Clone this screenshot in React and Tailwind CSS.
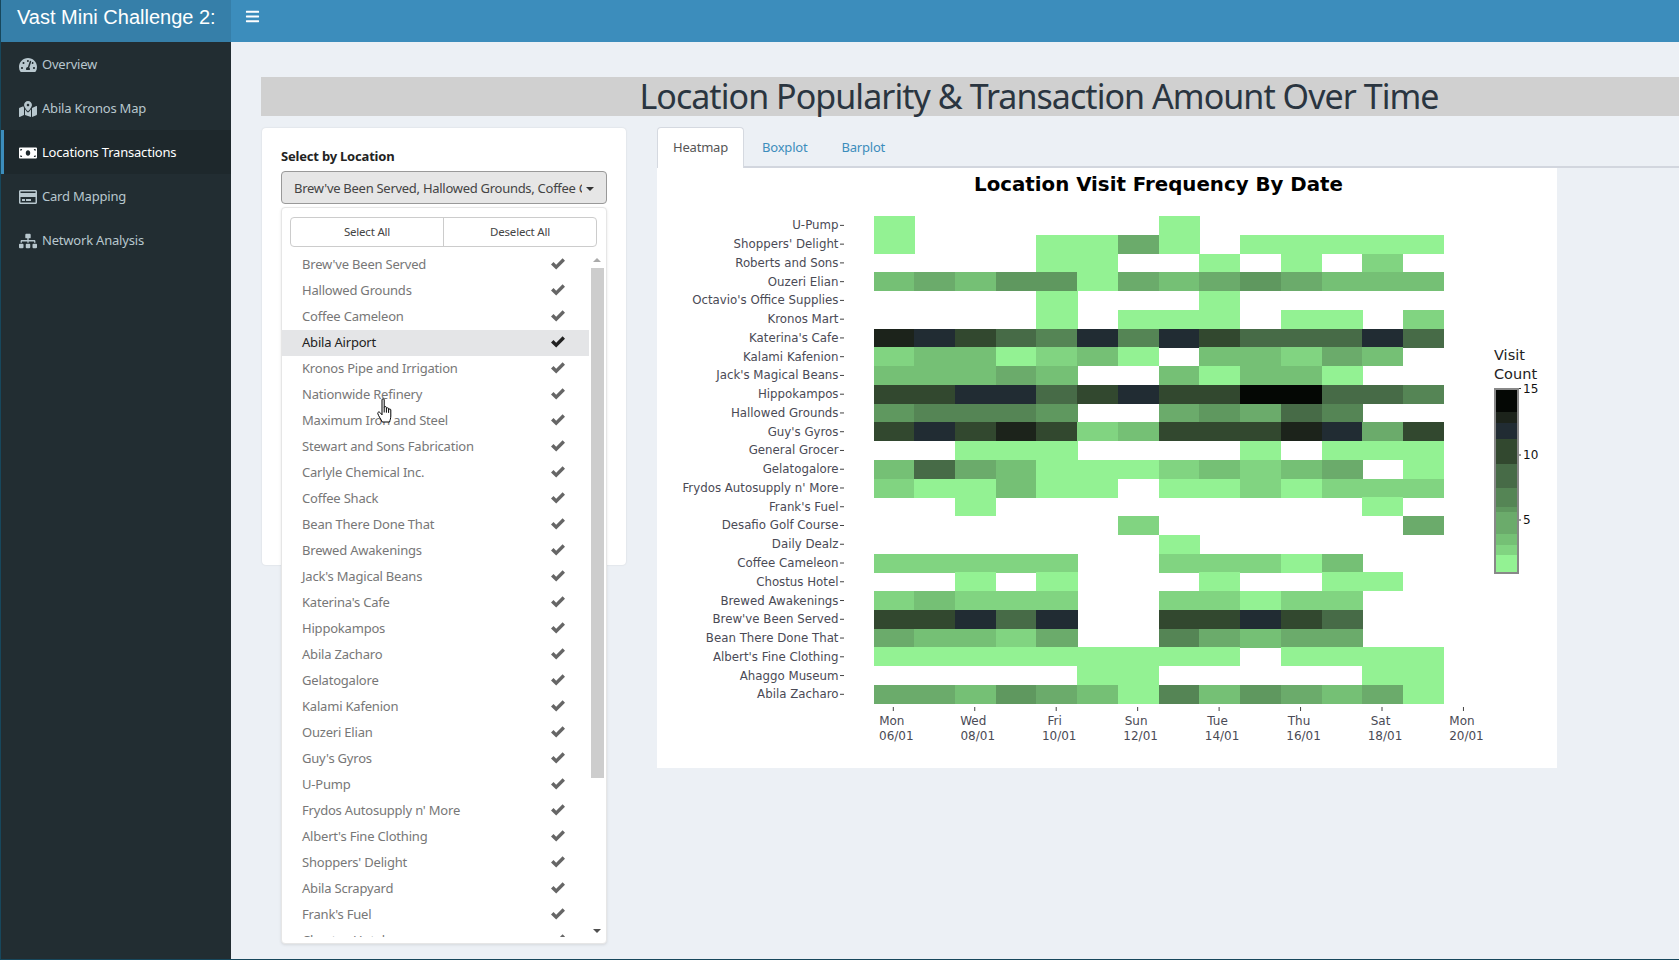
import React from "react";
import { FaTachometerAlt, FaMapMarkedAlt, FaMoneyBill, FaRegCreditCard, FaSitemap, FaBars } from "react-icons/fa";

const C = {
  a: "#93f293", b: "#81d481", c: "#75c075", d: "#6bab6b", e: "#5f985f", f: "#558555",
  g: "#476b47", h: "#32482f", i: "#212c33", j: "#1c231b", k: "#040704", ".": null,
};

const ROWS = [
  ["U-Pump", "a......a......"],
  ["Shoppers' Delight", "a...aada.aaaaa"],
  ["Roberts and Sons", "....aa..a.a.b."],
  ["Ouzeri Elian", "cdceeadcdedccc"],
  ["Octavio's Office Supplies", "....a...a....."],
  ["Kronos Mart", "....a.aaa.aa.b"],
  ["Katerina's Cafe", "jihgfifihgggig"],
  ["Kalami Kafenion", "bccabca.ccbdc."],
  ["Jack's Magical Beans", "cccdc..cacca.."],
  ["Hippokampos", "hhiighihhkkggf"],
  ["Hallowed Grounds", "efffe..dedgf.."],
  ["Guy's Gyros", "hihjhbchhhjidh"],
  ["General Grocer", "..aaa....a.aaa"],
  ["Gelatogalore", "cgdcaaabcbcd.a"],
  ["Frydos Autosupply n' More", "baacaa.aababbb"],
  ["Frank's Fuel", "..a.........a."],
  ["Desafio Golf Course", "......b......d"],
  ["Daily Dealz", ".......a......"],
  ["Coffee Cameleon", "bbbbb..bbbac.."],
  ["Chostus Hotel", "..a.a...a..aa."],
  ["Brewed Awakenings", "bcbbb..bbabb.."],
  ["Brew've Been Served", "hhigi..hhihg.."],
  ["Bean There Done That", "dccbd..fdcdd.."],
  ["Albert's Fine Clothing", "aaaaaaaaa.aaaa"],
  ["Ahaggo Museum", ".....aa.....aa"],
  ["Abila Zacharo", "ddcedcafcedcda"],
];

const X0 = 873.6, CW = 40.72, Y0 = 216, RH = 18.757;

const TICKS = [
  ["Mon", "06/01"], ["Wed", "08/01"], ["Fri", "10/01"], ["Sun", "12/01"],
  ["Tue", "14/01"], ["Thu", "16/01"], ["Sat", "18/01"], ["Mon", "20/01"],
];

const BAR = [
  ["k", 390, 412], ["j", 412, 423], ["i", 423, 439], ["h", 439, 464], ["g", 464, 488],
  ["f", 488, 507], ["e", 507, 512], ["d", 512, 534], ["c", 534, 545], ["b", 545, 555], ["a", 555, 572],
];

const ITEMS = [
  "Brew've Been Served", "Hallowed Grounds", "Coffee Cameleon", "Abila Airport", "Kronos Pipe and Irrigation",
  "Nationwide Refinery", "Maximum Iron and Steel", "Stewart and Sons Fabrication", "Carlyle Chemical Inc.",
  "Coffee Shack", "Bean There Done That", "Brewed Awakenings", "Jack's Magical Beans", "Katerina's Cafe",
  "Hippokampos", "Abila Zacharo", "Gelatogalore", "Kalami Kafenion", "Ouzeri Elian", "Guy's Gyros", "U-Pump",
  "Frydos Autosupply n' More", "Albert's Fine Clothing", "Shoppers' Delight", "Abila Scrapyard", "Frank's Fuel",
  "Chostus Hotel",
];

const NAV = [
  [FaTachometerAlt, "Overview"],
  [FaMapMarkedAlt, "Abila Kronos Map"],
  [FaMoneyBill, "Locations Transactions", true],
  [FaRegCreditCard, "Card Mapping"],
  [FaSitemap, "Network Analysis"],
];

function Check({ className }) {
  return (
    <svg viewBox="0 0 14 11.5" className={className} fill="currentColor">
      <polygon points="0,6.5 2.5,4 5.2,6.7 11.6,0.3 14,2.8 5.2,11.4" />
    </svg>
  );
}

function Hand({ className }) {
  return (
    <svg viewBox="0 0 16 25" className={className} fill="#fff" stroke="#000" strokeWidth="1" strokeLinejoin="round">
      <path d="M5 1.8c0-1.4 2.2-1.4 2.2 0V9.5c0-1.2 2.2-1.2 2.2 0v1.2c0-1.2 2.2-1.2 2.2 0v1.2c0-1.2 2.2-1.2 2.2 0V18c0 2.5-.8 4-1.2 6H5.2C4.4 21.8 1.4 18 .8 15.6c-.4-1.6 1.4-2.2 2.4-.9L5 16.8Z" />
      <path d="M7.2 9.5v5M9.4 10.7v4M11.6 11.9v3" fill="none" />
    </svg>
  );
}

function Chart() {
  const font = "'DejaVu Sans', Verdana, sans-serif";
  return (
    <svg viewBox="657 168 900 600" className="block w-[900px] h-[600px] tracking-normal">
      <text x="1158.5" y="191" textAnchor="middle" fontFamily={font} fontWeight="700" fontSize="19.8" fill="#000">
        Location Visit Frequency By Date
      </text>
      {ROWS.map(([name, cells], r) => (
        <g key={name}>
          <text x="838.5" y={Y0 + RH * r + RH / 2 + 4} textAnchor="end" fontFamily={font} fontSize="11.8" fill="#4a4a55">
            {name}
          </text>
          <rect x="840" y={Y0 + RH * r + RH / 2 - 0.5} width="4" height="1" fill="#444" />
          {cells.split("").map((c, i) =>
            C[c] ? (
              <rect key={i} x={X0 + CW * i} y={Y0 + RH * r} width={CW + 0.3} height={RH + 0.3} fill={C[c]} shapeRendering="crispEdges" />
            ) : null
          )}
        </g>
      ))}
      {TICKS.map(([d, t], i) => {
        const x = 893.3 + 81.45 * i;
        return (
          <g key={t} fontFamily={font} fontSize="12" fill="#4a4a55" textAnchor="middle">
            <rect x={x - 0.5} y="707" width="1" height="4" fill="#444" />
            <text x={x - 1.5} y="725">{d}</text>
            <text x={x + 3} y="740">{t}</text>
          </g>
        );
      })}
      <g fontFamily={font} fill="#222">
        <text x="1494" y="360" fontSize="14.5">Visit</text>
        <text x="1494" y="379" fontSize="14.5">Count</text>
        {BAR.map(([c, y1, y2]) => (
          <rect key={c} x="1495.5" y={y1} width="22" height={y2 - y1} fill={C[c]} shapeRendering="crispEdges" />
        ))}
        <rect x="1495" y="389" width="23" height="184" fill="none" stroke="#888" strokeWidth="2" />
        {[["15", 388], ["10", 454.5], ["5", 519.5]].map(([t, y]) => (
          <g key={t}>
            <rect x="1519" y={y} width="2" height="1" fill="#333" />
            <text x="1523" y={y + 4.5} fontSize="12" fill="#111">{t}</text>
          </g>
        ))}
      </g>
    </svg>
  );
}

export default function App() {
  return (
    <div className="h-screen w-full overflow-hidden flex flex-col bg-[#ecf0f5] border-l border-b border-[#17475c] font-['Noto_Sans',sans-serif] text-[13px] tracking-[-0.2px] text-[#333]">
      <header className="h-[42px] shrink-0 flex bg-[#3c8dbc] text-white">
        <div className="w-[230px] shrink-0 bg-[#367fa9] pl-[16px] pt-[5px] font-['Liberation_Sans',sans-serif] text-[20px] leading-[24px] tracking-normal">
          Vast Mini Challenge 2:
        </div>
        <div className="pl-[14px] pt-[9px]">
          <FaBars className="w-[15px] h-[15px]" />
        </div>
      </header>
      <div className="flex-1 flex min-h-0">
        <aside className="w-[230px] shrink-0 bg-[#222d32]">
          {NAV.map(([Icon, label, active]) => (
            <div
              key={label}
              className={
                active
                  ? "h-[44px] pt-[2px] flex items-center border-l-[3px] border-[#3c8dbc] bg-[#1e282c] pl-[15px] text-white"
                  : "h-[44px] pt-[2px] flex items-center border-l-[3px] border-transparent pl-[15px] text-[#b8c7ce]"
              }
            >
              <Icon className="w-[18px] h-[16px] mr-[5px] shrink-0" />
              <span>{label}</span>
            </div>
          ))}
        </aside>
        <main className="flex-1 min-w-0 overflow-hidden pt-[35px] pl-[30px]">
          <div className="w-[1556px] h-[39px] bg-[#d0d0d0] text-center text-[34px] leading-[38px] tracking-[-0.95px] text-[#2a3540] whitespace-nowrap">
            Location Popularity &amp; Transaction Amount Over Time
          </div>
          <div className="flex mt-[11px]">
            <section className="relative mt-[1px] w-[364px] h-[437px] ml-[1px] shrink-0 rounded-[4px] bg-white shadow-[0_0_2px_rgba(0,0,0,0.12)]">
              <div className="pl-[19px] pt-[20px] font-bold text-[13px] leading-[17px] text-[#222]">Select by Location</div>
              <button className="ml-[19px] mt-[6px] w-[326px] h-[33px] pt-[2px] flex items-center rounded-[4px] border border-[#999] bg-[#e6e6e6] pl-[12px] text-[#444]">
                <span className="w-[288px] overflow-hidden whitespace-nowrap text-left tracking-[-0.28px]">
                  Brew've Been Served, Hallowed Grounds, Coffee Cameleon
                </span>
                <span className="ml-[4px] w-0 h-0 border-x-[4px] border-x-transparent border-t-[4px] border-t-[#333]" />
              </button>
              <div className="absolute left-[19px] top-[79px] w-[326px] h-[737px] rounded-[4px] border border-[#e6e6e6] bg-white shadow-[0_1px_3px_rgba(0,0,0,0.1)]">
                <div className="flex ml-[8px] mt-[9px] h-[30px] w-[307px] rounded-[4px] border border-[#ccc] text-[11.5px] text-[#444]">
                  <div className="w-[153px] flex items-center justify-center border-r border-[#ccc]">Select All</div>
                  <div className="flex-1 flex items-center justify-center">Deselect All</div>
                </div>
                <div className="mt-[5px] h-[685px] w-[307px] overflow-hidden">
                  {ITEMS.map((item) => {
                    const active = item === "Abila Airport";
                    return (
                      <div
                        key={item}
                        className={
                          active
                            ? "h-[26px] flex items-center justify-between pl-[20px] pr-[24px] bg-[#e4e5e7] text-[#222]"
                            : "h-[26px] flex items-center justify-between pl-[20px] pr-[24px] text-[#777]"
                        }
                      >
                        <span>{item}</span>
                        <Check className={active ? "w-[14px] h-[11.5px] -mt-[2px] text-[#222]" : "w-[14px] h-[11.5px] -mt-[2px] text-[#666]"} />
                      </div>
                    );
                  })}
                </div>
                <span className="absolute left-[311px] top-[50px] w-0 h-0 border-x-[4px] border-x-transparent border-b-[4px] border-b-[#aaa]" />
                <div className="absolute left-[309px] top-[60px] w-[13px] h-[510px] bg-[#cdcdcd]" />
                <span className="absolute left-[311px] top-[721px] w-0 h-0 border-x-[4px] border-x-transparent border-t-[4px] border-t-[#505050]" />
              </div>
              <Hand className="absolute left-[115px] top-[270px] w-[16px] h-[25px]" />
            </section>
            <section className="ml-[31px] flex-1 min-w-0">
              <div className="flex h-[41px] border-b-2 border-[#d2d6de] text-[13px]">
                <div className="h-[41px] w-[87px] flex items-center justify-center bg-white rounded-t-[4px] border border-b-0 border-[#d5d9e0] text-[#555]">
                  Heatmap
                </div>
                <div className="pl-[18px] pt-[11px] text-[#3c8dbc]">Boxplot</div>
                <div className="pl-[34px] pt-[11px] text-[#3c8dbc]">Barplot</div>
              </div>
              <div className="w-[900px] h-[600px] bg-white">
                <Chart />
              </div>
            </section>
          </div>
        </main>
      </div>
    </div>
  );
}
